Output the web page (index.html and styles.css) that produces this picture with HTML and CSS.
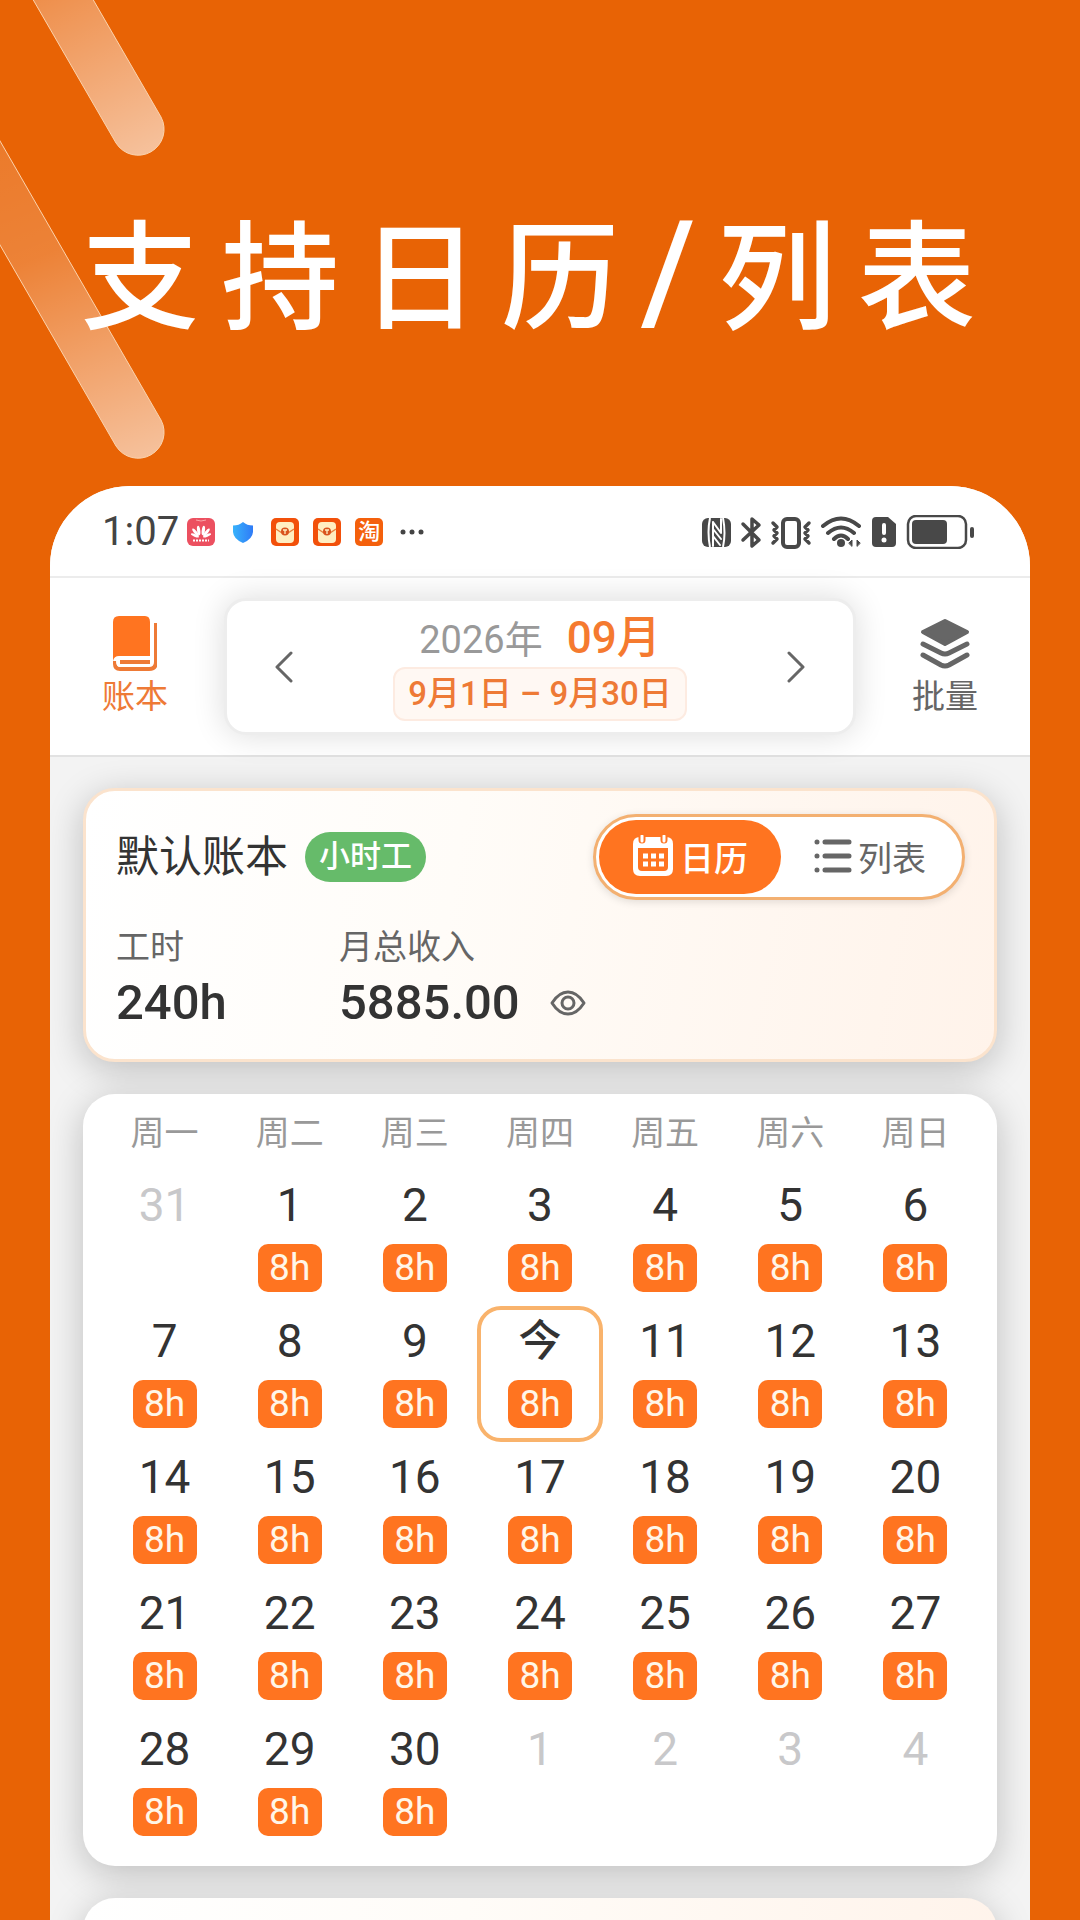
FILE: index.html
```
<!DOCTYPE html>
<html lang="zh-CN">
<head>
    <meta charset="UTF-8">
    <meta name="viewport" content="width=device-width, initial-scale=1.0">
    <title>支持日历/列表</title>
    <link rel="stylesheet" href="styles.css">
</head>
<body>

<svg class="stripes" viewBox="0 0 180 480" aria-hidden="true">
    <defs>
        <linearGradient id="fadeTop" gradientUnits="userSpaceOnUse" x1="-10" y1="-130" x2="139" y2="156">
            <stop offset="0" stop-color="#fff" stop-opacity="0.05"/>
            <stop offset="1" stop-color="#fff" stop-opacity="0.6"/>
        </linearGradient>
        <linearGradient id="fadeBottom" gradientUnits="userSpaceOnUse" x1="0" y1="110" x2="139" y2="459">
            <stop offset="0" stop-color="#fff" stop-opacity="0.14"/>
            <stop offset="0.4" stop-color="#fff" stop-opacity="0.2"/>
            <stop offset="1" stop-color="#fff" stop-opacity="0.6"/>
        </linearGradient>
    </defs>
    <path d="M20 -23 L116 143 A26 26 0 0 0 161 117 L65 -49 Z" fill="url(#fadeTop)" stroke="#fbd3ad"/>
    <path d="M-30 193 L116 446 A26 26 0 0 0 161 420 L-30 89 Z" fill="url(#fadeBottom)" stroke="#fbd3ad"/>
</svg>

<h1 class="headline">支持日历<span class="slash">/</span>列表</h1>

<main class="phone">
    <div class="status-bar">
        <div class="status-left">
            <span class="time">1:07</span>
            <div class="app-icons">
                <svg class="app-icon" viewBox="0 0 28 28">
                    <rect width="28" height="28" rx="6" fill="#ec5060"/>
                    <path d="M9 2 Q14 4 19 2" stroke="#f9a5a8" fill="none"/>
                    <g fill="#fff">
                        <ellipse cx="12.300" cy="12.500" rx="1.600" ry="4.800" transform="rotate(-8 12.300 17)"/>
                        <ellipse cx="15.700" cy="12.500" rx="1.600" ry="4.800" transform="rotate(8 15.700 17)"/>
                        <ellipse cx="11.500" cy="13" rx="1.600" ry="4.800" transform="rotate(-38 12 18)"/>
                        <ellipse cx="16.500" cy="13" rx="1.600" ry="4.800" transform="rotate(38 16 18)"/>
                        <ellipse cx="11" cy="14" rx="1.300" ry="4.300" transform="rotate(-68 12 18)"/>
                        <ellipse cx="17" cy="14" rx="1.300" ry="4.300" transform="rotate(68 16 18)"/>
                    </g>
                    <path d="M6 22.500h16" stroke="#fff" stroke-width="2" stroke-dasharray="2 1"/>
                </svg>
                <svg class="app-icon" viewBox="0 0 28 28">
                    <defs>
                        <linearGradient id="shield"><stop offset="0" stop-color="#38b2fb"/><stop offset="1" stop-color="#2f7bf7"/></linearGradient>
                    </defs>
                    <path d="M14 4 Q18 7.500 24 7.500 V14 Q23.500 21 14 25 Q4.500 21 4 14 V7.500 Q10 7.500 14 4Z" fill="url(#shield)"/>
                </svg>
                <svg class="app-icon" viewBox="0 0 28 28">
                    <rect width="28" height="28" rx="5" fill="#f2500a"/>
                    <rect x="5" y="4" width="18" height="21" rx="4" fill="#ffeec2"/>
                    <path d="M5 11 L11 15 M23 11 L17 15" stroke="#e9803f" stroke-width="1.500"/>
                    <circle cx="14" cy="13.500" r="4" fill="#d9531e"/>
                    <path d="M12 12h4M14 12v4" stroke="#ffeec2" stroke-width="1.300"/>
                </svg>
                <svg class="app-icon" viewBox="0 0 28 28">
                    <rect width="28" height="28" rx="5" fill="#f2500a"/>
                    <rect x="5" y="4" width="18" height="21" rx="4" fill="#ffeec2"/>
                    <path d="M5 11 L11 15 M23 11 L17 15" stroke="#e9803f" stroke-width="1.500"/>
                    <circle cx="14" cy="13.500" r="4" fill="#d9531e"/>
                    <path d="M12 12h4M14 12v4" stroke="#ffeec2" stroke-width="1.300"/>
                </svg>
                <span class="app-icon taobao">淘</span>
                <svg class="more" viewBox="0 0 28 28" fill="#444">
                    <circle cx="6" cy="14" r="2.500"/><circle cx="15" cy="14" r="2.500"/><circle cx="24" cy="14" r="2.500"/>
                </svg>
            </div>
        </div>
        <svg class="status-right" viewBox="0 0 274 34" fill="none" stroke="#484848" stroke-linecap="round" stroke-linejoin="round">
            <!-- nfc -->
            <rect x="0" y="3" width="29" height="29" rx="6" fill="#484848" stroke="none"/>
            <path d="M8 3 Q5 17 8 32 M21 3 Q24 18 21 32" stroke="#fff" stroke-width="2" stroke-linecap="butt"/>
            <path d="M11 7 V31 M11 7 L19 18 V4 M11 14 L19 24 M11 21 L18 30" stroke="#fff" stroke-width="2"/>
            <!-- bluetooth -->
            <path d="M41 9 L57 25 L50 31 V4 L57 10 L41 25" stroke-width="3.500"/>
            <!-- vibrate -->
            <rect x="81" y="4" width="16" height="28" rx="4" stroke-width="4"/>
            <path d="M71 8 l4 4 l-3 3 l3 3 l-3 3 l3 3 l-4 4 M107 8 l-4 4 l3 3 l-3 3 l3 3 l-3 3 l4 4" stroke-width="3.500"/>
            <!-- wifi -->
            <path d="M121 11 Q139 -4 157 11 M126 18 Q139 7 152 18 M132 24 Q139 17 146 24" stroke-width="4"/>
            <circle cx="139" cy="28" r="4" fill="#484848" stroke="none"/>
            <path d="M147 28 l3 -3 v6 z M158 28 l-3 -3 v6 z" fill="#484848" stroke-width="1"/>
            <!-- sim -->
            <path d="M174 2 H186 L194 9 V28 Q194 32 190 32 H174 Q170 32 170 28 V6 Q170 2 174 2Z" fill="#484848" stroke="none"/>
            <path d="M182 10 V18" stroke="#fff" stroke-width="4"/>
            <circle cx="182" cy="25" r="2.500" fill="#fff" stroke="none"/>
            <!-- battery -->
            <rect x="206" y="1" width="58" height="32" rx="8" stroke-width="2.500"/>
            <rect x="210" y="5" width="35" height="24" rx="4" fill="#484848" stroke="none"/>
            <path d="M270 14 V21" stroke-width="4"/>
        </svg>
    </div>

    <header class="toolbar">
        <button type="button" class="tool tool-active">
            <svg class="book-icon" viewBox="0 0 44 56" fill="none">
                <path d="M6 1 H32 Q37 1 37 7 V41 H6 Q1 41 0 46 V7 Q0 1 6 1Z" fill="#ff7420"/>
                <path d="M2 46 V49 Q2 54 7 54 H36 Q43 54 43 47 V8" stroke="#ee7a36" stroke-width="4"/>
                <path d="M38 43 H8 Q4 43 4 47 Q4 51 8 51 H36" stroke="#fff" stroke-width="2"/>
                <path d="M7 47 H37" stroke="#ee7a36" stroke-width="4"/>
                <path d="M39.500 6 V46" stroke="#fff" stroke-width="3"/>
            </svg>
            账本
        </button>
        <div class="month-picker">
            <button type="button" class="arrow" aria-label="上个月">
                <svg viewBox="0 0 18 32"><path d="M16 2 L2 16 L16 30"/></svg>
            </button>
            <div class="month-info">
                <div class="month-title"><span class="year">2026年</span><strong class="month">09月</strong></div>
                <div class="range">9月1日 – 9月30日</div>
            </div>
            <button type="button" class="arrow" aria-label="下个月">
                <svg viewBox="0 0 18 32"><path d="M2 2 L16 16 L2 30"/></svg>
            </button>
        </div>
        <button type="button" class="tool">
            <svg class="layers-icon" viewBox="0 0 50 56" fill="none" stroke="#666" stroke-width="4" stroke-linecap="round" stroke-linejoin="round">
                <path d="M25 6 L47 17 L25 29 L3 17Z" fill="#666"/>
                <path d="M3 29 L21 38 Q25 40 29 38 L47 29 M3 40 L21 50 Q25 52 29 50 L47 40" stroke-width="5"/>
            </svg>
            批量
        </button>
    </header>

    <section class="card summary">
        <div class="summary-top">
            <h2 class="book-name">默认账本</h2>
            <span class="tag">小时工</span>
            <div class="view-switch">
                <button type="button" class="view view-active">
                    <svg class="calendar-icon" viewBox="0 0 42 42">
                        <path d="M8 2 H34 Q41 2 41 9 V34 Q41 41 34 41 H8 Q1 41 1 34 V9 Q1 2 8 2Z" fill="#fff"/>
                        <path d="M6 13 H36 V32 Q36 36 32 36 H10 Q6 36 6 32Z" fill="#ff7420"/>
                        <path d="M10 0 V5 M32 0 V5" stroke="#ff7420" stroke-width="7" stroke-linecap="round"/>
                        <path d="M10 1 V6 M32 1 V6" stroke="#fff" stroke-width="3" stroke-linecap="round"/>
                        <path d="M11 21 H32 M11 29 H32" stroke="#fff" stroke-width="5" stroke-dasharray="5 3"/>
                    </svg>
                    日历
                </button>
                <button type="button" class="view">
                    <svg class="list-icon" viewBox="0 0 38 42" stroke="#666" stroke-width="5" stroke-linecap="round">
                        <path d="M3 7h0M3 21h0M3 35h0M11 7h24M11 21h24M11 35h24"/>
                    </svg>
                    列表
                </button>
            </div>
        </div>
        <dl class="stats">
            <div class="stat">
                <dt>工时</dt>
                <dd>240h</dd>
            </div>
            <div class="stat">
                <dt>月总收入</dt>
                <dd>5885.00
                    <button type="button" class="eye" aria-label="显示收入">
                        <svg viewBox="0 0 36 26" fill="none" stroke="#666" stroke-width="3">
                            <path d="M2 13 Q9 2 18 2 Q27 2 34 13 Q27 24 18 24 Q9 24 2 13Z" stroke-linejoin="round"/>
                            <circle cx="18" cy="13" r="6"/>
                        </svg>
                    </button>
                </dd>
            </div>
        </dl>
    </section>

    <section class="card calendar">
        <table>
            <thead>
                <tr><th>周一</th><th>周二</th><th>周三</th><th>周四</th><th>周五</th><th>周六</th><th>周日</th></tr>
            </thead>
            <tbody>
                <tr>
                    <td class="other">31</td>
                    <td>1<span class="hours">8h</span></td>
                    <td>2<span class="hours">8h</span></td>
                    <td>3<span class="hours">8h</span></td>
                    <td>4<span class="hours">8h</span></td>
                    <td>5<span class="hours">8h</span></td>
                    <td>6<span class="hours">8h</span></td>
                </tr>
                <tr>
                    <td>7<span class="hours">8h</span></td>
                    <td>8<span class="hours">8h</span></td>
                    <td>9<span class="hours">8h</span></td>
                    <td class="today"><span class="today-label">今</span><span class="hours">8h</span></td>
                    <td>11<span class="hours">8h</span></td>
                    <td>12<span class="hours">8h</span></td>
                    <td>13<span class="hours">8h</span></td>
                </tr>
                <tr>
                    <td>14<span class="hours">8h</span></td>
                    <td>15<span class="hours">8h</span></td>
                    <td>16<span class="hours">8h</span></td>
                    <td>17<span class="hours">8h</span></td>
                    <td>18<span class="hours">8h</span></td>
                    <td>19<span class="hours">8h</span></td>
                    <td>20<span class="hours">8h</span></td>
                </tr>
                <tr>
                    <td>21<span class="hours">8h</span></td>
                    <td>22<span class="hours">8h</span></td>
                    <td>23<span class="hours">8h</span></td>
                    <td>24<span class="hours">8h</span></td>
                    <td>25<span class="hours">8h</span></td>
                    <td>26<span class="hours">8h</span></td>
                    <td>27<span class="hours">8h</span></td>
                </tr>
                <tr>
                    <td>28<span class="hours">8h</span></td>
                    <td>29<span class="hours">8h</span></td>
                    <td>30<span class="hours">8h</span></td>
                    <td class="other">1</td>
                    <td class="other">2</td>
                    <td class="other">3</td>
                    <td class="other">4</td>
                </tr>
            </tbody>
        </table>
    </section>

    <section class="card next-card"></section>
</main>

</body>
</html>
```
FILE: styles.css
```
* {
    box-sizing: border-box;
}
body {
    margin: 0;
    height: 100vh;
    overflow: hidden;
    display: flex;
    flex-direction: column;
    background-color: #e86305;
    color: #333;
    font-family: Roboto, "Noto Sans CJK SC", sans-serif;
}
button {
    padding: 0;
    border: none;
    background: none;
    color: inherit;
    font: inherit;
    cursor: pointer;
}
svg {
    display: block;
}
.stripes {
    position: absolute;
    top: 0;
    left: 0;
    width: 180px;
    height: 480px;
}
.headline {
    position: relative;
    margin: 0;
    padding: 192px 0 126px 81px;
    color: #fff;
    font-size: 118px;
    font-weight: 500;
    line-height: 160px;
    letter-spacing: 22px;
    white-space: nowrap;
}
.slash {
    font-size: 140px;
    font-weight: 500;
}
.phone {
    flex: 1;
    min-height: 0;
    margin: 0 50px;
    overflow: hidden;
    background-color: #f3f3f3;
    border-radius: 80px 80px 0 0;
}

/* status bar */
.status-bar {
    display: flex;
    align-items: center;
    justify-content: space-between;
    height: 92px;
    padding: 2px 54px 0 52px;
    background-color: #fff;
    border-bottom: 2px solid #ececec;
}
.status-left {
    display: flex;
    align-items: center;
    gap: 8px;
}
.time {
    color: #444;
    font-size: 40px;
    line-height: 48px;
}
.app-icons {
    display: flex;
    gap: 14px;
}
.app-icon,
.more {
    width: 28px;
    height: 28px;
}
.taobao {
    border-radius: 5px;
    background-color: #f4600c;
    color: #fff;
    font-size: 22px;
    font-weight: 500;
    line-height: 28px;
    text-align: center;
}
.status-right {
    width: 274px;
    height: 34px;
}

/* toolbar */
.toolbar {
    display: grid;
    grid-template-columns: 170px 1fr 170px;
    gap: 4px;
    align-items: center;
    height: 179px;
    background-color: #fff;
    border-bottom: 2px solid #e2e2e2;
}
.tool {
    display: flex;
    flex-direction: column;
    align-items: center;
    gap: 4px;
    color: #666;
    font-size: 33px;
    line-height: 44px;
}
.tool-active {
    color: #ee7a36;
}
.book-icon {
    width: 44px;
    height: 56px;
}
.layers-icon {
    width: 50px;
    height: 56px;
}
.month-picker {
    display: flex;
    align-items: center;
    justify-content: space-between;
    height: 137px;
    padding: 0 36px;
    background-color: #fff;
    border: 3px solid #ededed;
    border-radius: 22px;
    box-shadow: 0 0 32px rgba(0, 0, 0, 0.14);
}
.arrow {
    padding: 12px;
}
.arrow svg {
    width: 18px;
    height: 32px;
    fill: none;
    stroke: #666;
    stroke-width: 3;
    stroke-linecap: round;
    stroke-linejoin: round;
}
.month-info {
    display: flex;
    flex-direction: column;
    align-items: center;
    gap: 2px;
}
.month-title {
    display: flex;
    align-items: baseline;
    gap: 24px;
    line-height: 50px;
}
.year {
    color: #999;
    font-size: 38px;
}
.month {
    color: #f57a2f;
    font-size: 44px;
    font-weight: 500;
}
.range {
    padding: 0 13px;
    border: 2px solid #fdebe1;
    border-radius: 12px;
    background-color: #fff8f3;
    color: #ee7a36;
    font-size: 33px;
    font-weight: 500;
    line-height: 50px;
}

.card {
    margin: 0 33px;
    border-radius: 32px;
    background-color: #fff;
    box-shadow: 0 8px 36px rgba(0, 0, 0, 0.22);
}
.summary {
    height: 274px;
    margin-top: 31px;
    padding: 23px 29px 0 30px;
    border: 3px solid #fbe3cd;
    background-image: linear-gradient(100deg, #fff 0%, #fffcf8 40%, #fff3ea 100%);
}
.summary-top {
    display: flex;
    align-items: center;
}
.book-name {
    margin: 0;
    font-size: 43px;
    font-weight: 400;
    line-height: 60px;
}
.tag {
    margin-left: 17px;
    padding: 0 14px;
    border-radius: 25px;
    background-color: #66bb6a;
    color: #fff;
    font-size: 31px;
    font-weight: 500;
    line-height: 50px;
}
.view-switch {
    display: flex;
    margin-left: auto;
    padding: 3px;
    border: 3px solid #f3b071;
    border-radius: 43px;
    background-color: #fff;
    box-shadow: 0 2px 8px rgba(0, 0, 0, 0.12);
}
.view {
    display: flex;
    align-items: center;
    justify-content: center;
    gap: 6px;
    width: 178px;
    height: 74px;
    padding-bottom: 2px;
    border-radius: 37px;
    color: #666;
    font-size: 34px;
}
.view-active {
    width: 182px;
    background-color: #ff7420;
    color: #fff;
    font-weight: 500;
}
.calendar-icon {
    width: 42px;
    height: 42px;
}
.list-icon {
    width: 38px;
    height: 42px;
}
.stats {
    display: flex;
    margin: 21px 0 0;
}
.stat:first-child {
    width: 223px;
}
.stat dt {
    color: #666;
    font-size: 34px;
    line-height: 52px;
}
.stat dd {
    display: flex;
    align-items: center;
    gap: 30px;
    margin: 0;
    font-size: 49px;
    font-weight: 500;
    line-height: 60px;
}
.eye svg {
    width: 36px;
    height: 26px;
}

/* calendar */
.calendar {
    margin-top: 32px;
    padding: 0 19px 16px;
}
.calendar table {
    width: 100%;
    table-layout: fixed;
    border-collapse: separate;
    border-spacing: 0;
}
.calendar th {
    height: 76px;
    padding: 0 0 4px;
    color: #999;
    font-size: 34px;
    font-weight: 400;
}
.calendar td {
    height: 136px;
    padding: 4px 0 0;
    border: 4px solid transparent;
    font-size: 46px;
    line-height: 54px;
    text-align: center;
    vertical-align: top;
}
.calendar .other {
    color: #c8c8ca;
}
.calendar .today {
    border-color: #f9b36c;
    border-radius: 24px;
}
.today-label {
    display: block;
    height: 54px;
    font-size: 43px;
    font-weight: 500;
}
.hours {
    display: block;
    width: 64px;
    margin: 12px auto 0;
    border-radius: 10px;
    background-color: #ff7420;
    color: #fff6e8;
    font-size: 37px;
    line-height: 48px;
}
.next-card {
    height: 274px;
    margin-top: 32px;
    background-image: linear-gradient(100deg, #fff 0%, #fffcf8 40%, #fff3ea 100%);
}
```
